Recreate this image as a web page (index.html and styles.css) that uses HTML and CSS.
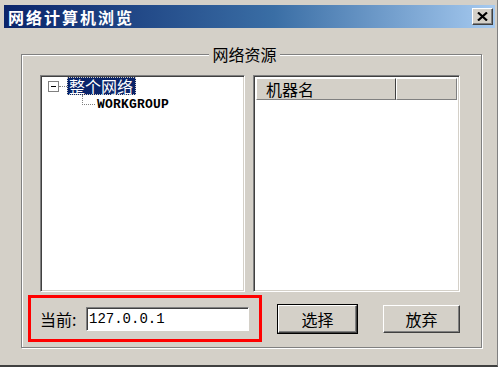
FILE: index.html
```html
<!DOCTYPE html>
<html>
	<head>
		<title>网络计算机浏览</title>
		<link rel="stylesheet" href="styles.css">
	</head>
	<body>
		<div class="window">
			<div class="titlebar">
				<span class="title">网络计算机浏览</span>
				<span class="close">
					<svg width="11" height="9" viewBox="0 0 11 9">
						<path d="M1 0.5 L10 8.5 M10 0.5 L1 8.5" stroke="#000" stroke-width="2.2"/>
					</svg>
				</span>
			</div>
			<fieldset class="group">
				<legend>网络资源</legend>
				<div class="panels">
					<div class="tree">
						<div class="node">
							<span class="toggle"></span><span class="dots"></span><span class="label selected">整个网络</span>
						</div>
						<div class="node child">
							<span class="elbow"></span><span class="label mono">WORKGROUP</span>
						</div>
					</div>
					<div class="list">
						<div class="list-head">
							<span class="col col-name">机器名</span>
							<span class="col col-rest"></span>
						</div>
					</div>
				</div>
				<div class="bottom">
					<div class="current">
						<span class="current-label">当前:</span>
						<input type="text" class="address" value="127.0.0.1">
					</div>
					<button class="btn btn-ok">选择</button>
					<button class="btn">放弃</button>
				</div>
			</fieldset>
		</div>
	</body>
</html>
```

FILE: styles.css
```css
body {
	margin: 0;
	background: #fff;
	font-family: "Noto Sans CJK SC", "DejaVu Sans", sans-serif;
}
.window {
	width: 498px;
	height: 367px;
	box-sizing: border-box;
	padding: 4px 2px 0 4px;
	background: #d4d0c8;
	border-right: 1px solid #808080;
	border-bottom: 2px solid #404040;
}
.titlebar {
	height: 23px;
	margin-top: 1px;
	display: flex;
	align-items: center;
	justify-content: space-between;
	background: linear-gradient(to right, #0a246a, #3a6ea5 55%, #a6caf0);
	padding: 0 2px 0 4px;
}
.title {
	color: #fff;
	font-weight: bold;
	font-size: 16px;
	letter-spacing: 2px;
}
.close {
	width: 21px;
	height: 17px;
	box-sizing: border-box;
	background: #d4d0c8;
	border: 1px solid;
	border-color: #fff #404040 #404040 #fff;
	box-shadow: inset -1px -1px 0 #808080;
	display: flex;
	align-items: center;
	justify-content: center;
}
.group {
	margin: 16px 0 0 17px;
	width: 461px;
	box-sizing: border-box;
	padding: 11px 20px 5px 6px;
	border: 1px solid #808080;
	box-shadow: inset 1px 1px 0 #fff, 1px 1px 0 #fff;
}
.group legend {
	margin: 0 auto;
	padding: 0 3px;
	background: #d4d0c8;
	font-size: 16px;
	line-height: 20px;
	color: #000;
}
.panels {
	display: flex;
	gap: 8px;
	margin-left: 12px;
	height: 217px;
}
.tree, .list {
	box-sizing: border-box;
	background: #fff;
	border: 1px solid;
	border-color: #808080 #fff #fff #808080;
	box-shadow: inset 1px 1px 0 #404040, inset -1px -1px 0 #d4d0c8;
}
.tree {
	width: 205px;
	padding: 1px 0 0 7px;
}
.list {
	width: 207px;
	padding: 2px;
}
.node {
	height: 18px;
	display: flex;
	align-items: center;
}
.toggle {
	width: 11px;
	height: 11px;
	box-sizing: border-box;
	border: 1px solid #808080;
	background: linear-gradient(#000, #000) center / 5px 1px no-repeat, #fff;
}
.dots {
	width: 8px;
	border-top: 1px dotted #808080;
}
.label {
	font-size: 16px;
	line-height: 18px;
	padding: 0 3px 0 2px;
}
.selected {
	background: #0a246a;
	color: #fff;
	outline: 1px dotted #d4d0c8;
	outline-offset: -1px;
}
.child {
	align-items: flex-start;
}
.elbow {
	width: 12px;
	height: 9px;
	margin-left: 34px;
	border-left: 1px dotted #808080;
	border-bottom: 1px dotted #808080;
}
.mono {
	font-family: "Liberation Mono", monospace;
	font-weight: bold;
	font-size: 13px;
	line-height: 18px;
	margin-top: 1px;
	letter-spacing: 0.2px;
}
.list-head {
	display: flex;
	height: 22px;
}
.col {
	box-sizing: border-box;
	background: #d4d0c8;
	border: 1px solid;
	border-color: #fff #808080 #808080 #fff;
	box-shadow: inset -1px 0 0 #d4d0c8;
	font-size: 16px;
	line-height: 20px;
}
.col-name {
	width: 140px;
	padding-left: 9px;
	border-right-color: #404040;
}
.col-rest {
	flex: 1;
}
.bottom {
	display: flex;
	align-items: center;
	margin-top: 3px;
}
.current {
	width: 234px;
	height: 47px;
	box-sizing: border-box;
	border: 3px solid #f00;
	display: flex;
	align-items: center;
	padding-left: 9px;
}
.current-label {
	font-size: 16px;
	width: 46px;
}
.address {
	width: 163px;
	height: 24px;
	box-sizing: border-box;
	border: 1px solid;
	border-color: #808080 #fff #fff #808080;
	box-shadow: inset 1px 1px 0 #404040;
	font-family: "Liberation Mono", monospace;
	font-size: 14px;
	padding: 0 2px;
	outline: none;
}
.btn {
	width: 79px;
	height: 28px;
	margin-left: 16px;
	background: #d4d0c8;
	border: 1px solid;
	border-color: #fff #404040 #404040 #fff;
	box-shadow: inset -1px -1px 0 #808080;
	font-family: "Noto Sans CJK SC", sans-serif;
	font-size: 16px;
	padding: 0;
}
.btn-ok {
	outline: 1px solid #000;
}
.btn + .btn {
	margin-left: 26px;
	width: 77px;
}
```
